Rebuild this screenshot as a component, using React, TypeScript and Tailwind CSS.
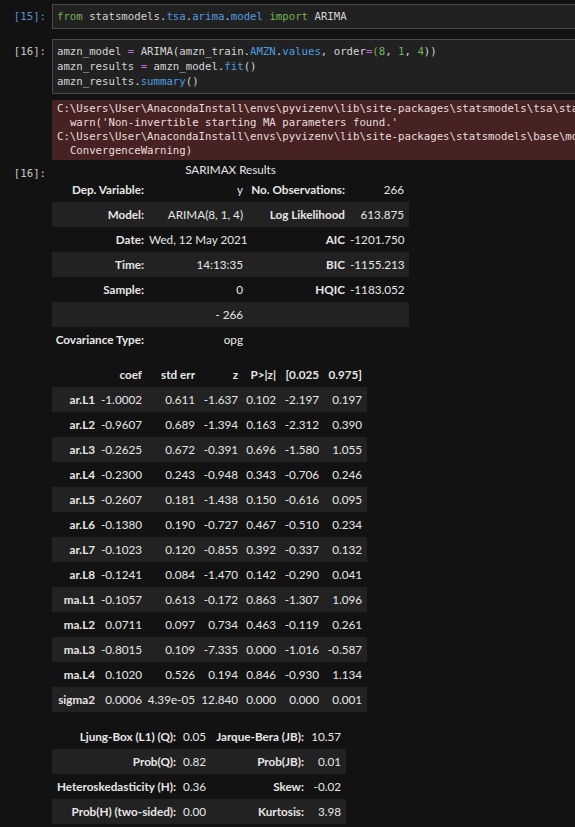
import React from "react";

const mono = { fontFamily: '"DejaVu Sans Mono", "Liberation Mono", monospace' };
const sans = { fontFamily: 'Lato, "Noto Sans", sans-serif' };

function Prompt({ n, blue }: { n: number; blue?: boolean }) {
  return (
    <div
      className={`w-[52px] shrink-0 pr-[6px] text-right text-[10.7px] leading-[15px] ${blue ? "text-[#5f8fd6]" : "text-[#c8c8c8]"}`}
      style={mono}
    >
      [{n}]:
    </div>
  );
}

const G = ({ children }: { children: React.ReactNode }) => <span className="text-[#75b35a]">{children}</span>;
const B = ({ children }: { children: React.ReactNode }) => <span className="text-[#4f9ce0]">{children}</span>;
const P = ({ children }: { children: React.ReactNode }) => <span className="text-[#c06bd8]">{children}</span>;

const overview: [string, string, string, string][] = [
  ["Dep. Variable:", "y", "No. Observations:", "266"],
  ["Model:", "ARIMA(8, 1, 4)", "Log Likelihood", "613.875"],
  ["Date:", "Wed, 12 May 2021", "AIC", "-1201.750"],
  ["Time:", "14:13:35", "BIC", "-1155.213"],
  ["Sample:", "0", "HQIC", "-1183.052"],
  ["", "- 266", "", ""],
  ["Covariance Type:", "opg", "", ""],
];

const coefs: string[][] = [
  ["ar.L1", "-1.0002", "0.611", "-1.637", "0.102", "-2.197", "0.197"],
  ["ar.L2", "-0.9607", "0.689", "-1.394", "0.163", "-2.312", "0.390"],
  ["ar.L3", "-0.2625", "0.672", "-0.391", "0.696", "-1.580", "1.055"],
  ["ar.L4", "-0.2300", "0.243", "-0.948", "0.343", "-0.706", "0.246"],
  ["ar.L5", "-0.2607", "0.181", "-1.438", "0.150", "-0.616", "0.095"],
  ["ar.L6", "-0.1380", "0.190", "-0.727", "0.467", "-0.510", "0.234"],
  ["ar.L7", "-0.1023", "0.120", "-0.855", "0.392", "-0.337", "0.132"],
  ["ar.L8", "-0.1241", "0.084", "-1.470", "0.142", "-0.290", "0.041"],
  ["ma.L1", "-0.1057", "0.613", "-0.172", "0.863", "-1.307", "1.096"],
  ["ma.L2", "0.0711", "0.097", "0.734", "0.463", "-0.119", "0.261"],
  ["ma.L3", "-0.8015", "0.109", "-7.335", "0.000", "-1.016", "-0.587"],
  ["ma.L4", "0.1020", "0.526", "0.194", "0.846", "-0.930", "1.134"],
  ["sigma2", "0.0006", "4.39e-05", "12.840", "0.000", "0.000", "0.001"],
];

const diag: [string, string, string, string][] = [
  ["Ljung-Box (L1) (Q):", "0.05", "Jarque-Bera (JB):", "10.57"],
  ["Prob(Q):", "0.82", "Prob(JB):", "0.01"],
  ["Heteroskedasticity (H):", "0.36", "Skew:", "-0.02"],
  ["Prob(H) (two-sided):", "0.00", "Kurtosis:", "3.98"],
];

function Table({ widths, rows, header, boldCols }: { widths: number[]; rows: string[][]; header?: string[]; boldCols: number[] }) {
  const total = widths.reduce((a, b) => a + b, 0);
  return (
    <table className="table-fixed border-collapse text-[11.7px] text-[#e6e6e6]" style={{ ...sans, width: total }}>
      <colgroup>
        {widths.map((w, i) => (
          <col key={i} style={{ width: w }} />
        ))}
      </colgroup>
      <tbody>
        {header && (
          <tr className="h-[25px]">
            {header.map((h, i) => (
              <td key={i} className="whitespace-nowrap p-0 pr-[5px] text-right font-bold">
                {h}
              </td>
            ))}
          </tr>
        )}
        {rows.map((r, ri) => (
          <tr key={ri} className={`h-[25px] ${(ri + (header ? 0 : 1)) % 2 === 0 ? "bg-[#222222]" : ""}`}>
            {r.map((c, ci) => (
              <td key={ci} className={`whitespace-nowrap p-0 pr-[5px] text-right ${boldCols.includes(ci) ? "font-bold" : ""}`}>
                {c}
              </td>
            ))}
          </tr>
        ))}
      </tbody>
    </table>
  );
}

export default function App() {
  return (
    <div className="h-[827px] w-[575px] overflow-hidden bg-[#121212] pt-[4px]">
      <div className="flex">
        <div className="pt-[5px]">
          <Prompt n={15} blue />
        </div>
        <div className="w-[640px] shrink-0 border border-[#4a4a4a] bg-[#212121] px-[4px] py-[4px] text-[10.7px] leading-[15px] text-[#d4d4d4]" style={mono}>
          <G>from</G> statsmodels.<B>tsa</B>.<B>arima</B>.<B>model</B> <G>import</G> ARIMA
        </div>
      </div>

      <div className="mt-[10px] flex">
        <div className="pt-[5px]">
          <Prompt n={16} />
        </div>
        <div className="w-[640px] shrink-0 whitespace-pre border border-[#4a4a4a] bg-[#212121] px-[4px] py-[4px] text-[10.7px] leading-[15px] text-[#d4d4d4]" style={mono}>
          <div>
            amzn_model <P>=</P> ARIMA(amzn_train.<B>AMZN</B>.<B>values</B>, order<P>=</P>
            <G>(8</G>, <G>1</G>, <G>4</G>))
          </div>
          <div>
            amzn_results <P>=</P> amzn_model.<B>fit</B>()
          </div>
          <div>
            amzn_results.<B>summary</B>()
          </div>
        </div>
      </div>

      <div className="mt-[6px] flex">
        <div className="w-[52px] shrink-0" />
        <div className="w-[523px] shrink-0 overflow-hidden whitespace-pre bg-[#472222] px-[5px] py-[2px] text-[10.7px] leading-[14px] text-[#e8dede]" style={mono}>
          <div>C:\Users\User\AnacondaInstall\envs\pyvizenv\lib\site-packages\statsmodels\tsa\sta</div>
          <div>{"  "}warn('Non-invertible starting MA parameters found.'</div>
          <div>C:\Users\User\AnacondaInstall\envs\pyvizenv\lib\site-packages\statsmodels\base\mo</div>
          <div>{"  "}ConvergenceWarning)</div>
        </div>
      </div>

      <div className="flex">
        <div className="pt-[6px]">
          <Prompt n={16} />
        </div>
        <div className="flex flex-col">
          <div className="w-[357px] pt-[1px] text-center text-[11.7px] leading-[16px] text-[#e6e6e6]" style={sans}>
            SARIMAX Results
          </div>
          <Table widths={[97, 99, 102, 59]} rows={overview} boldCols={[0, 2]} />
          <div className="mt-[10px]">
            <Table
              widths={[48, 47, 53, 43, 38, 43, 43]}
              header={["", "coef", "std err", "z", "P>|z|", "[0.025", "0.975]"]}
              rows={coefs}
              boldCols={[0]}
            />
          </div>
          <div className="mt-[12px]">
            <Table widths={[129, 30, 98, 37]} rows={diag} boldCols={[0, 2]} />
          </div>
        </div>
      </div>
    </div>
  );
}
